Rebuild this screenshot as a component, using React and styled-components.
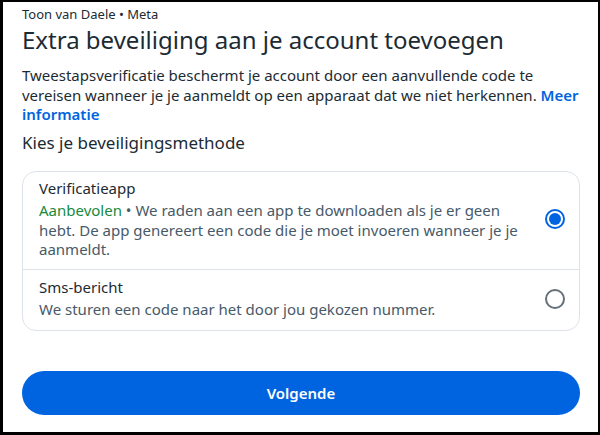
import React, { useState } from "react";
import styled, { createGlobalStyle } from "styled-components";

const Global = createGlobalStyle`
  html, body { margin: 0; padding: 0; background: #000; }
  body { font-family: "Noto Sans", Roboto, Arial, sans-serif; }
  * { box-sizing: border-box; }
`;

const Frame = styled.div`
  margin: 2px 2px 3px 3px;
  height: 430px;
  background: #fff;
  padding: 4px 18px 0 19px;
  display: flex;
  flex-direction: column;
  color: #1c2b33;
`;

const Byline = styled.div`
  font-size: 13px;
  line-height: 16px;
  color: #1c2b33;
`;

const Title = styled.h1`
  margin: 3px 0 0 0;
  font-size: 24px;
  line-height: 30px;
  font-weight: 400;
  color: #1c2b33;
`;

const Para = styled.p`
  margin: 11px 0 0 0;
  font-size: 15px;
  line-height: 19.5px;
  color: #1c2b33;
`;

const Link = styled.a`
  color: #0064e0;
  font-weight: 600;
  text-decoration: none;
`;

const Heading = styled.h2`
  margin: 7px 0 0 0;
  font-size: 17px;
  line-height: 22px;
  font-weight: 400;
  color: #1c2b33;
`;

const Card = styled.div`
  margin-top: 17px;
  border: 1px solid #dee3e9;
  border-radius: 14px;
  display: flex;
  flex-direction: column;
`;

const Option = styled.label`
  display: flex;
  align-items: center;
  gap: 16px;
  padding: ${p => p.$pad};
  cursor: pointer;
  & + & { border-top: 1px solid #dee3e9; }
`;

const OptionText = styled.div`
  flex: 1;
  display: flex;
  flex-direction: column;
  gap: ${p => p.$gap || "3px"};
`;

const OptionTitle = styled.div`
  font-size: 15px;
  line-height: 19.5px;
  color: #1c2b33;
`;

const OptionDesc = styled.div`
  font-size: 15px;
  line-height: 19.5px;
  color: #465a69;
`;

const Green = styled.span`
  color: #188a3d;
`;

const Radio = styled.span`
  width: 20px;
  height: 20px;
  border-radius: 50%;
  flex-shrink: 0;
  border: 2px solid ${p => (p.$on ? "#0064e0" : "#65707a")};
  display: flex;
  align-items: center;
  justify-content: center;
  &::after {
    content: "";
    width: 12px;
    height: 12px;
    border-radius: 50%;
    background: ${p => (p.$on ? "#0064e0" : "transparent")};
  }
`;

const Button = styled.button`
  margin-top: 40px;
  height: 44px;
  border: none;
  border-radius: 22px;
  background: #0064e0;
  color: #fff;
  font-family: inherit;
  font-size: 15px;
  font-weight: 600;
  cursor: pointer;
`;

export default function App() {
  const [sel, setSel] = useState("app");
  return (
    <>
      <Global />
      <Frame>
        <Byline>Toon van Daele • Meta</Byline>
        <Title>Extra beveiliging aan je account toevoegen</Title>
        <Para>
          Tweestapsverificatie beschermt je account door een aanvullende code te
          vereisen wanneer je je aanmeldt op een apparaat dat we niet herkennen.{" "}
          <Link href="#">Meer informatie</Link>
        </Para>
        <Heading>Kies je beveiligingsmethode</Heading>
        <Card>
          <Option $pad="7px 14px 9px 16px" onClick={() => setSel("app")}>
            <OptionText $gap="3px">
              <OptionTitle>Verificatieapp</OptionTitle>
              <OptionDesc>
                <Green>Aanbevolen</Green> • We raden aan een app te downloaden als je er geen
                hebt. De app genereert een code die je moet invoeren wanneer je je
                aanmeldt.
              </OptionDesc>
            </OptionText>
            <Radio $on={sel === "app"} />
          </Option>
          <Option $pad="8px 14px 10px 16px" onClick={() => setSel("sms")}>
            <OptionText $gap="3px">
              <OptionTitle>Sms-bericht</OptionTitle>
              <OptionDesc>We sturen een code naar het door jou gekozen nummer.</OptionDesc>
            </OptionText>
            <Radio $on={sel === "sms"} />
          </Option>
        </Card>
        <Button>Volgende</Button>
      </Frame>
    </>
  );
}
